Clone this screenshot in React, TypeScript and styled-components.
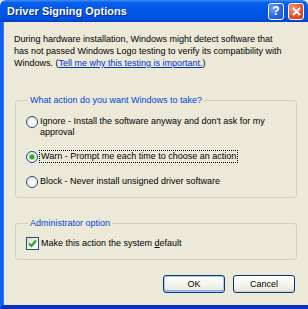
import React from 'react'
import styled, { createGlobalStyle } from 'styled-components'

const GlobalStyle = createGlobalStyle`
  html, body {
    margin: 0;
    padding: 0;
    background: #ece9d8;
  }
  body {
    font-family: 'Liberation Sans', Tahoma, Arial, sans-serif;
    font-size: 9px;
    color: #000;
  }
`

const Window = styled.div`
  width: 308px;
  height: 309px;
  display: flex;
  flex-direction: column;
  overflow: hidden;
  background: #ece9d8;
`

const TitleBar = styled.div`
  height: 22px;
  flex: none;
  display: flex;
  align-items: center;
  justify-content: space-between;
  padding: 0 4px 0 7px;
  background: linear-gradient(
    180deg,
    #3d8ff8 0%,
    #0a5fea 12%,
    #0157e7 45%,
    #0152e2 80%,
    #0040c6 100%
  );
  border-radius: 6px 6px 0 0;
`

const Title = styled.span`
  color: #fff;
  font-weight: bold;
  font-size: 10.8px;
  letter-spacing: 0.1px;
  text-shadow: 1px 1px 0 #0a2a8a;
`

const Caps = styled.div`
  display: flex;
  gap: 4px;
`

const CapButton = styled.div<{ $close?: boolean }>`
  width: 16px;
  height: 17px;
  box-sizing: border-box;
  border: 1px solid #fff;
  border-radius: 3px;
  display: flex;
  align-items: center;
  justify-content: center;
  color: #fff;
  font-weight: bold;
  font-size: 12px;
  background: ${(p) =>
    p.$close
      ? 'radial-gradient(circle at 30% 30%, #f29b7d 0%, #e2562e 55%, #c53a14 100%)'
      : 'radial-gradient(circle at 30% 30%, #6fa1ff 0%, #2a66e6 55%, #1a4fd0 100%)'};
`

const Body = styled.div`
  flex: 1;
  display: flex;
  flex-direction: column;
  padding: 11px 11px 0 11px;
  border-left: 3px solid #0f5ff2;
  border-bottom: 4px solid #0632c4;
  box-shadow: inset 1px 0 0 #2f7bff;
`

const Intro = styled.p`
  margin: 0;
  line-height: 12px;
  white-space: nowrap;
`

const Link = styled.a`
  color: #0033cc;
  text-decoration: underline;
`

const Group = styled.fieldset<{ $pt: number; $pb: number; $mt: number }>`
  margin: ${(p) => p.$mt}px 0 0 1px;
  padding: ${(p) => p.$pt}px 8px ${(p) => p.$pb}px 10px;
  border: 1px solid #d0d0bf;
  border-radius: 3px;
  display: flex;
  flex-direction: column;
  gap: 13px;
  min-width: 0;
`

const Legend = styled.legend`
  color: #0046d5;
  padding: 0 2px;
  margin-left: 2px;
  line-height: 12px;
`

const Option = styled.label`
  display: flex;
  align-items: flex-start;
  gap: 2px;
  line-height: 11px;
  white-space: nowrap;
`

const Radio = styled.span<{ $checked?: boolean }>`
  flex: none;
  width: 12px;
  height: 12px;
  box-sizing: border-box;
  border: 1px solid #1c5180;
  border-radius: 50%;
  background: radial-gradient(circle at 65% 65%, #fff 0%, #f4f3ee 50%, #dcdad0 100%);
  display: flex;
  align-items: center;
  justify-content: center;

  &::after {
    content: '';
    width: 4px;
    height: 4px;
    border-radius: 50%;
    background: ${(p) => (p.$checked ? '#21a121' : 'transparent')};
    box-shadow: ${(p) => (p.$checked ? '0 0 0 1px #7cd57c' : 'none')};
  }
`

const Focused = styled.span`
  outline: 1px dotted #000;
  outline-offset: 0;
  padding: 0 1px;
`

const Check = styled.span`
  flex: none;
  width: 13px;
  height: 13px;
  box-sizing: border-box;
  border: 1px solid #1c5180;
  background: linear-gradient(135deg, #dcdad0 0%, #f4f3ee 60%, #fff 100%);
  display: flex;
  align-items: center;
  justify-content: center;
`

const CheckRow = styled(Option)`
  align-items: center;
  line-height: 13px;
`

const Buttons = styled.div`
  display: flex;
  justify-content: flex-end;
  gap: 8px;
  margin-top: 15px;
  padding-right: 2px;
`

const Button = styled.button<{ $default?: boolean }>`
  width: 62px;
  height: 18px;
  padding: 0;
  font-family: inherit;
  font-size: 9px;
  color: #000;
  border: 1px solid #003c74;
  border-radius: 3px;
  background: linear-gradient(180deg, #ffffff 0%, #f6f5f0 50%, #eceae2 85%, #d6d0c5 100%);
  box-shadow: ${(p) =>
    p.$default ? 'inset 0 0 0 1px #a9c6f5, inset 0 -1px 0 1px #88acea' : 'inset 0 -1px 0 #d6d0c5'};
`

export default function App() {
  return (
    <>
      <GlobalStyle />
      <Window>
        <TitleBar>
          <Title>Driver Signing Options</Title>
          <Caps>
            <CapButton>?</CapButton>
            <CapButton $close>
              <svg width="9" height="9" viewBox="0 0 9 9">
                <path d="M1 1 L8 8 M8 1 L1 8" stroke="#fff" strokeWidth="1.8" />
              </svg>
            </CapButton>
          </Caps>
        </TitleBar>
        <Body>
          <Intro>
            During hardware installation, Windows might detect software that
            <br />
            has not passed Windows Logo testing to verify its compatibility with
            <br />
            Windows. (<Link>Tell me why this testing is important.</Link>)
          </Intro>
          <Group $mt={25} $pt={10} $pb={9}>
            <Legend>What action do you want Windows to take?</Legend>
            <Option>
              <Radio />
              <span>
                Ignore - Install the software anyway and don't ask for my
                <br />
                approval
              </span>
            </Option>
            <Option>
              <Radio $checked />
              <Focused>Warn - Prompt me each time to choose an action</Focused>
            </Option>
            <Option>
              <Radio />
              <span>Block - Never install unsigned driver software</span>
            </Option>
          </Group>
          <Group $mt={19} $pt={8} $pb={9}>
            <Legend>Administrator option</Legend>
            <CheckRow>
              <Check>
                <svg width="9" height="9" viewBox="0 0 9 9">
                  <path d="M1 4.5 L3.5 7 L8 1.5" stroke="#21a121" strokeWidth="2" fill="none" />
                </svg>
              </Check>
              <span>
                Make this action the system <u>d</u>efault
              </span>
            </CheckRow>
          </Group>
          <Buttons>
            <Button $default>OK</Button>
            <Button>Cancel</Button>
          </Buttons>
        </Body>
      </Window>
    </>
  )
}
